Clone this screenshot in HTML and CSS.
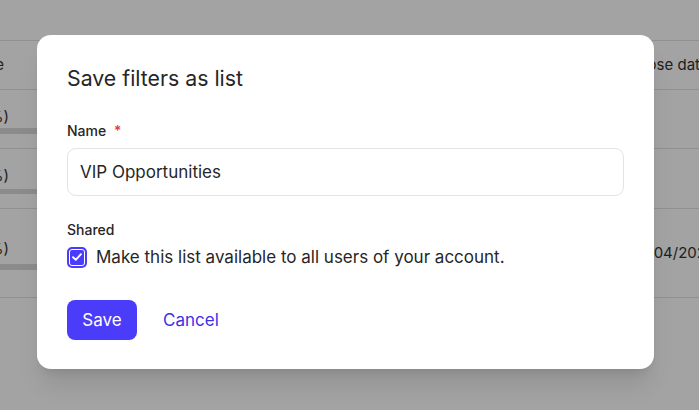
FILE: index.html
```html
<!DOCTYPE html>
<html>
<head>
<meta charset="utf-8">
<link rel="stylesheet" href="styles.css">
</head>
<body>
<div class="page">
  <div class="table">
    <div class="row head">
      <div class="cell left">Stage</div>
      <div class="cell right">Close date</div>
    </div>
    <div class="row r1">
      <div class="cell left stack"><span>Proposal (60%)</span><span class="bar"></span></div>
      <div class="cell right"></div>
    </div>
    <div class="row r2">
      <div class="cell left stack"><span>Qualified (20%)</span><span class="bar"></span></div>
      <div class="cell right"></div>
    </div>
    <div class="row r3">
      <div class="cell left stack"><span>Negotiation (80%)</span><span class="bar"></span></div>
      <div class="cell right date">12/04/2024</div>
    </div>
    <div class="row r4"></div>
  </div>
</div>
<div class="overlay"></div>
<div class="dialog">
  <h2 class="title">Save filters as list</h2>
  <div class="field">
    <label class="label">Name <span class="req">*</span></label>
    <div class="input">VIP Opportunities</div>
  </div>
  <div class="field shared">
    <div class="label">Shared</div>
    <div class="check-row">
      <span class="checkbox"><svg viewBox="0 0 16 16" width="14" height="14"><path d="M3.5 8.3 L6.6 11.2 L12.5 4.8" fill="none" stroke="#fff" stroke-width="2.2" stroke-linecap="round" stroke-linejoin="round"/></svg></span>
      <span>Make this list available to all users of your account.</span>
    </div>
  </div>
  <div class="actions">
    <button class="btn-save">Save</button>
    <button class="btn-cancel">Cancel</button>
  </div>
</div>
</body>
</html>
```

FILE: styles.css
```css
* { box-sizing: border-box; }
html, body { margin: 0; padding: 0; }
body {
  width: 699px;
  height: 410px;
  overflow: hidden;
  background: #fff;
  font-family: Inter, "Noto Sans", sans-serif;
  color: #262626;
  position: relative;
}
.page { padding-top: 40px; }
.table { border-top: 1px solid #e2e2e2; }
.row {
  display: flex;
  justify-content: space-between;
  border-bottom: 1px solid #e2e2e2;
  font-size: 15px;
  line-height: 20px;
  color: #333;
}
.head { height: 49px; align-items: center; }
.r1 { height: 59px; }
.r2 { height: 60px; }
.r3 { height: 89px; }
.r4 { height: 60px; border-bottom: none; }
.cell.left {
  width: 9px;
  display: flex;
  justify-content: flex-end;
  white-space: nowrap;
}
.head .cell.left { width: 4px; }
.cell.right { width: 66px; white-space: nowrap; }
.cell.stack {
  flex-direction: column;
  justify-content: flex-start;
  align-items: flex-end;
}
.r1 .stack { padding-top: 17px; }
.r2 .stack { padding-top: 17px; }
.r3 .stack { padding-top: 30px; }
.stack .bar {
  display: block;
  width: 150px;
  height: 6px;
  margin-right: -40px;
  background: #dadada;
}
.r1 .bar { margin-top: 1px; }
.r2 .bar { margin-top: 3px; height: 5px; }
.r3 .bar { margin-top: 5px; }
.date { padding-top: 34px; }
.overlay {
  position: absolute;
  inset: 0;
  background: rgba(0,0,0,0.36);
}
.dialog {
  position: absolute;
  left: 37px;
  top: 35px;
  width: 617px;
  height: 334px;
  background: #fff;
  border-radius: 14px;
  padding: 29px 30px;
  box-shadow: 0 20px 25px -5px rgba(0,0,0,0.1), 0 8px 10px -6px rgba(0,0,0,0.1);
  display: flex;
  flex-direction: column;
}
.title {
  margin: 0;
  font-size: 21.3px;
  line-height: 28px;
  font-weight: 400;
  color: #262626;
}
.field { margin-top: 29px; display: flex; flex-direction: column; }
.label {
  font-size: 14px;
  line-height: 20px;
  font-weight: 500;
  color: #262626;
}
.req { color: #e5383b; margin-left: 4px; }
.input {
  margin-top: 7px;
  height: 48px;
  border: 1px solid #e3e3e3;
  border-radius: 9px;
  padding: 0 12px;
  display: flex;
  align-items: center;
  font-size: 17px;
  color: #262626;
}
.shared { margin-top: 24px; }
.check-row {
  margin-top: 5px;
  display: flex;
  align-items: center;
  gap: 9px;
  font-size: 17px;
  line-height: 24px;
  color: #262626;
}
.checkbox {
  width: 20px;
  height: 21px;
  border-radius: 5px;
  background: #4b3cfa;
  border: 2px solid #4b3cfa;
  box-shadow: inset 0 0 0 1px #fff;
  display: flex;
  align-items: center;
  justify-content: center;
  flex: none;
}
.actions {
  margin-top: 31px;
  display: flex;
  align-items: center;
  gap: 26px;
}
.btn-save {
  height: 40px;
  width: 70px;
  border: none;
  border-radius: 8px;
  background: #4b3cfa;
  color: #fff;
  font-family: inherit;
  font-size: 17px;
  padding: 0;
}
.btn-cancel {
  border: none;
  background: none;
  color: #3d30e8;
  font-family: inherit;
  font-size: 17px;
  padding: 0;
}
```
